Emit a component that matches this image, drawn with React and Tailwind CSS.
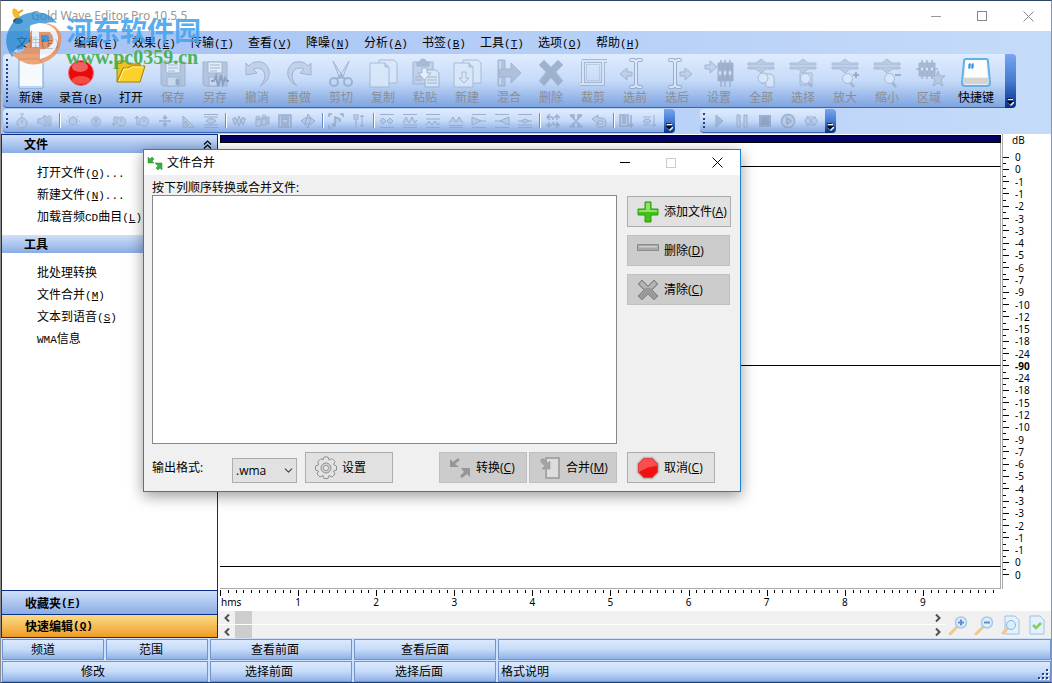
import { ChevronDown } from "lucide-react";

const GRAY = { fill: "#bccde6", stroke: "#96a9c6", strokeWidth: 1 };
const PALE = { fill: "#dbe8fa", stroke: "#9fb2ce", strokeWidth: 1 };

function Lens({ children }) {
  return (
    <g {...PALE}>
      <path d="M3 6h8l5-4 5 4h8v2H3zM3 10h26v2h-8l-5 4-5-4H3z" fill="#b3c5df" />
      <path d="m21.500 26 3.500 4" strokeWidth="3" />
      <circle cx="18.500" cy="21.500" r="5" />
      {children}
    </g>
  );
}

function Beam({ x }) {
  return (
    <g>
      <path d={`M${x - 5} 3h3l2 2 2-2h3M${x - 5} 30h3l2-2 2 2h3M${x} 4v25`} fill="none" stroke="#8fa3c1" strokeWidth="4" strokeLinecap="round" />
      <path d={`M${x - 5} 3h3l2 2 2-2h3M${x - 5} 30h3l2-2 2 2h3M${x} 4v25`} fill="none" stroke="#dce9fb" strokeWidth="2" strokeLinecap="round" />
    </g>
  );
}

const BIG = {
  blank: (
    <g>
      <path d="M4 2h20l4 4v25H4z" fill="#f6faff" stroke="#6ea3d4" />
      <path d="M5 29h22v2H5z" fill="#b8d7f3" />
      <path d="M24 2v4h4z" fill="#b8d2ec" />
    </g>
  ),
  record: (
    <g>
      <circle cx="16" cy="16" r="12.500" fill="#e90b0b" stroke="#f06a6a" />
      <ellipse cx="15" cy="10" rx="8" ry="5" fill="#fff" opacity="0.350" />
      <ellipse cx="16" cy="23" rx="9" ry="4" fill="#ff8b7d" opacity="0.500" />
    </g>
  ),
  open: (
    <g stroke="#a87c00" strokeWidth="1">
      <path d="M2 25V6q0-2 2-2h6l3 3h12v4" fill="#f0c020" />
      <path d="M2 25 8 11h5l3-2h14l-5 16z" fill="#fbd22c" />
      <path d="M4 24 9 12h5l3-2h11" fill="none" stroke="#fff5a8" />
    </g>
  ),
  save: (
    <g {...GRAY}>
      <path d="M4 5h24v24H6l-2-2z" fill="#adbfd9" />
      <path d="M9 5h14v11H9z" fill="#e5effc" />
      <path d="M11 8h10M11 11h10M11 14h7" />
      <path d="M10 20h13v9H10z" fill="#c9d8ee" />
      <path d="M19 22h3v6h-3z" fill="#8497b5" />
    </g>
  ),
  saveAs: (
    <g {...GRAY}>
      <path d="M4 5h24v24H6l-2-2z" fill="#adbfd9" />
      <path d="M9 5h14v11H9z" fill="#e5effc" />
      <path d="M11 8h10M11 11h10M11 14h7" />
      <path d="M10 20h10v9H10z" fill="#c9d8ee" />
      <path d="M12 24h3l2-5 2 10 3-11 2 9 2-6 2 3h2" fill="none" stroke="#7f93b3" strokeWidth="2" />
    </g>
  ),
  undo: <path d="M5 6v12l11-2-4-4q8-3 11 3 3 7-4 14 11-6 9-16Q25 3 14 5q-4 1-6 4z" {...GRAY} />,
  redo: <path d="M28 6v12l-11-2 4-4q-8-3-11 3-3 7 4 14Q3 23 5 13 8 3 19 5q4 1 6 4z" {...GRAY} />,
  cut: (
    <g {...GRAY}>
      <path d="m8 4 9 15-2 3zM24 4l-9 15 2 3z" fill="#dce8f9" />
      <g fill="none" strokeWidth="2">
        <circle cx="9" cy="25" r="4" />
        <circle cx="23" cy="25" r="4" />
        <path d="m12 22 5-5M20 22l-5-5" />
      </g>
    </g>
  ),
  copy: (
    <g {...PALE}>
      <path d="M12 3h15l3 3v20H12z" />
      <path d="M3 6h15l4 4v20H3z" />
      <path d="M18 6v4h4" fill="#b7c8e1" />
    </g>
  ),
  paste: (
    <g {...GRAY}>
      <path d="M4 5h20v22H4z" />
      <path d="M8 9V5h3q0-3 3-3t3 3h3v4z" fill="#9cb0cc" />
      <path d="M16 13h11l3 3v14H16z" fill="#dce8fa" />
      <path d="M18 20h10M18 23h10M18 26h10M6 20h7M6 23h7" />
      <path d="M13 11h5v5h4l-6.500 7L9 16h4z" fill="#eaf2fe" />
    </g>
  ),
  copyNew: (
    <g {...PALE}>
      <path d="M12 3h15l3 3v20H12z" />
      <path d="M3 6h15l4 4v20H3z" />
      <path d="M18 6v4h4" fill="#b7c8e1" />
      <path d="M11 15h4v6h3l-5 5-5-5h3z" />
    </g>
  ),
  mix: (
    <g {...GRAY}>
      <path d="M5 3h7v26H5z" fill="#a9bcd8" />
      <path d="M6 12h12V6l10 10-10 10v-6H6z" fill="#a6b9d5" />
      <path d="M7 4v8M7 21v7" stroke="#e0ebfb" />
    </g>
  ),
  remove: <path d="m4 8 5-5 7 7 7-7 5 5-7 7 7 9-5 5-7-8-7 8-5-5 7-9z" fill="#93a7c4" stroke="#a9bcd6" />,
  crop: (
    <g fill="none" strokeLinejoin="round">
      <path d="M3 27h23V4M5 4h25M6 4v24" stroke="#9bafcb" strokeWidth="4" />
      <path d="M3 27h23V4M5 4h25M6 4v24" stroke="#d7e4f7" strokeWidth="2" />
      <path d="M9.500 7.500h13v16h-13z" stroke="#a5b8d3" strokeDasharray="2 1" />
    </g>
  ),
  before: (
    <g>
      <path d="M1 17 8 11v4h5v4H8v4z" {...GRAY} />
      <Beam x={17} />
    </g>
  ),
  after: (
    <g>
      <path d="M31 17 24 11v4h-5v4h5v4z" {...GRAY} />
      <Beam x={14} />
    </g>
  ),
  place: (
    <g {...GRAY}>
      <path d="M2 8h5V4l7 6-7 6v-4H2z" />
      <path d="M15 6h15v18H15z" fill="#8da1bf" />
      <path d="M18 3v27M22 3v27M27 3v27" strokeWidth="1.500" />
      <path d="m15 16 2-4 2 4-2 4zM20 16l2-4 2 4-2 4zM25 16l2-4 2 4-2 4z" fill="#d3e1f5" />
    </g>
  ),
  all: (
    <g>
      <Lens />
      <path d="M20 17h6l3 3v10h-8z" {...PALE} />
      <circle cx="18" cy="21" r="5" {...PALE} />
    </g>
  ),
  select: (
    <g>
      <Lens />
      <path d="M13 16h12v12H13z" fill="none" stroke="#9aaeca" />
    </g>
  ),
  zoomIn: (
    <g>
      <Lens />
      <path d="M24 18h6M27 15v6" stroke="#8fa3c1" strokeWidth="2" />
    </g>
  ),
  zoomOut: (
    <g>
      <Lens />
      <path d="M24 18h6" stroke="#8fa3c1" strokeWidth="2" />
    </g>
  ),
  region: (
    <g {...GRAY}>
      <path d="M6 6h16v13H6z" fill="#9db0cc" />
      <path d="M9 3v19M14 3v19M19 3v19M3 12h22" strokeWidth="1.500" />
      <path d="m7 12 2-3 2 3-2 3zM12 12l2-3 2 3-2 3zM17 12l2-3 2 3-2 3z" fill="#d3e1f5" />
      <path d="m25 14 2 5h5l-4 4 2 6-5-3-5 3 2-6-4-4h5z" fill="#b5c7e0" />
    </g>
  ),
  key: (
    <g>
      <path d="M6 2h20q2 0 2 2l2 22q0 3-3 3H5q-3 0-3-3L4 4q0-2 2-2z" fill="#eee" stroke="#60b2e8" strokeWidth="2" />
      <path d="M6 3h20l1 17H5z" fill="#fdfdfd" />
      <path d="M4 21h24l1 6H3z" fill="#d6d4d2" />
      <path d="m10 6-1 6M13 6l-1 6M8 8h6M8 10h6" stroke="#1d83e0" strokeWidth="1" fill="none" />
    </g>
  ),
};

const TOOLS = [
  ["新建", "blank", "w-[42px]"],
  ["录音", "record", "w-[58px]", "R"],
  ["打开", "open", "w-[42px]"],
  ["保存", "save"],
  ["另存", "saveAs"],
  ["撤消", "undo"],
  ["重做", "redo"],
  ["剪切", "cut"],
  ["复制", "copy"],
  ["粘贴", "paste"],
  ["新建", "copyNew"],
  ["混合", "mix"],
  ["删除", "remove"],
  ["裁剪", "crop"],
  ["选前", "before"],
  ["选后", "after"],
  ["设置", "place"],
  ["全部", "all"],
  ["选择", "select"],
  ["放大", "zoomIn"],
  ["缩小", "zoomOut"],
  ["区域", "region"],
  ["快捷键", "key", "w-[52px]"],
];

// small effect icons, 16x16, all drawn disabled
const FRAME = "M1 1.500h14M1 14.500h14";
const FX = {
  timer: <path d="M8 2v3M6 1h4M8 5a5 5 0 1 0 .1 0M8 7v3" />,
  volume: <path d="M1 6h3l4-4v12l-4-4H1zM10 3v10M12 2v12M14 3v10" />,
  bright: <path d="M8 4a4 4 0 1 0 .1 0M1 8h1M14 8h1M3 3l1 1M13 3l-1 1M3 13l1-1M13 13l-1-1" />,
  clock: <path d="M8 4a4.500 4.500 0 1 0 .1 0M8 6v3M6 7h4M6 10h4" />,
  back: <path d="M10 4a4.500 4.500 0 1 0 .1 0M10 6v3M3 12V4h4M1 10l2 3 2-3" />,
  fwd: <path d="M10 4a4.500 4.500 0 1 0 .1 0M10 6v3M3 4v8h3M1 6l2-3 2 3" />,
  squeeze: <path d="M2 8h12M8 2v4M8 14v-4M6 4l2 2 2-2M6 12l2-2 2 2" strokeWidth="1.500" />,
  ramp: <path d="M3 3v11h11zM5 8v4h4z" />,
  normal: <path d={FRAME + "M1 4h14M1 12h14M3 8q5-5 10 0-5 5-10 0z"} />,
  crowd: <path d="M4 4 2 8l2 4 2-4zM8 3 6 8l2 5 2-5zM12 4l-2 4 2 4 2-4zM2 5v2M14 5v2" />,
  cam: <path d="M2 6h5v7H2zM8 5h4v7H8zM4 3a2 2 0 1 0 .1 0M10 2a2 2 0 1 0 .1 0M13 4h2v7h-2z" />,
  film: <path d="M2 2h12v12H2zM5 6h6v4H5zM4 4h8M4 12h8" strokeWidth="1.500" />,
  dia: <path d="m1 8 4-3h6l4 3-4 3H5zM8 1l3 4-3 10-3-4z" />,
  note: <path d="M1 4V1h3M12 1h3v3M1 12v3h3M7 11V4l5 2v3M5 11h2v2H5z" strokeWidth="1.500" />,
  fork: <path d="M3 1v5q1 2 4 0V1M5 7v8M11 2v12M9 4l2-2 2 2M9 12l2 2 2-2" />,
  eqA: <path d={FRAME + "M1 8l3-3 3 3-3 3zM8 8l3-3 3 3-3 3z"} />,
  eqB: <path d={FRAME + "M1 10l3-6 3 6 3-6 3 6 2-3M1 12h14"} />,
  eqC: <path d={FRAME + "M1 6h14M1 12l3-4 3 4 3-4 3 4 2-2"} />,
  eqD: <path d="M1 10l4-6 3 5 3-5 4 6M1 12.500h14M1 14.500h14" />,
  fadeR: <path d={FRAME + "M1 4l9 4-9 4zM10 8h5"} />,
  fadeL: <path d={FRAME + "M15 4 6 8l9 4zM1 8h5"} />,
  fadeM: <path d={FRAME + "M1 8h3l4-2 4 2h3M4 8l4 2 4-2M1 12h14"} />,
  swap: <path d="M5 1 2 4l3 3M2 4h4q2 0 2 3M11 15l3-3-3-3M14 12h-4q-2 0-2-3M15 5l-3-3-3 3M12 2v5M1 11l3 3 3-3M4 14V9" fill="none" strokeWidth="1.500" />,
  cross: <path d="M2 2l12 12M14 2 2 14M2 2h4v4M14 2h-4v4M2 14h4v-4M14 14h-4v-4" strokeWidth="1.500" />,
  ret: <path d="M1 6l6-4v3h5q3 1 3 5 0 4-4 4H6v-3h5q2-2 0-3H7v3z" />,
  noise: <path d="M1 2h8v11H1zM3 4h4M3 6h4M3 8h4M3 10h4M12 2v10M10 11l2 3 2-3" strokeWidth="1.500" />,
  waveD: <path d="M1 4h8M1 8q4-4 8 0-4 4-8 0zM1 12h8M12 2v11M10 11l2 3 2-3" />,
  play: <path d="M5 2v12l7-6z" fill="#9fb2ce" />,
  pause: <path d="M3 2h3v12H3zM10 2h3v12h-3z" />,
  stop: <path d="M3 3h10v10H3z" strokeWidth="2" fill="#8498b8" />,
  playC: <path d="M8 1.500a6.500 6.500 0 1 0 .1 0M7 5v6l4-3z" strokeWidth="1.500" />,
  loop: <path d="M5 5a3 3 0 1 0 .1 0M11 5a3 3 0 1 0 .1 0M3 4h10M3 12h10" />,
};

const FX_GROUPS = [
  ["timer", "volume"],
  ["bright", "clock", "back", "fwd", "squeeze", "ramp", "normal"],
  ["crowd", "cam", "film", "dia"],
  ["note", "fork"],
  ["eqA", "eqB", "eqC", "eqD", "fadeR", "fadeL", "fadeM"],
  ["swap", "cross", "ret"],
  ["noise", "waveD"],
];

const MENUS = [
  ["文件", "F"], ["编辑", "E"], ["效果", "E"], ["传输", "T"], ["查看", "V"], ["降噪", "N"],
  ["分析", "A"], ["书签", "B"], ["工具", "T"], ["选项", "O"], ["帮助", "H"],
];

const HALF = ["0", "0", "-1", "-1", "-2", "-3", "-3", "-4", "-5", "-6", "-7", "-9", "-10", "-12", "-15", "-18", "-24"];
const LEVELS = [...HALF, "-90", ...[...HALF].reverse()];

function Mono({ children }) {
  return <span className="font-['Liberation_Mono',monospace] text-[11px]">{children}</span>;
}

function Hot({ k }) {
  return <Mono>(<span className="underline">{k}</span>)</Mono>;
}

function Grip({ className }) {
  return <span className={`w-[3px] shrink-0 border-l-2 border-dotted border-[#27417f] ${className}`} />;
}

function Cap() {
  return (
    <button aria-label="更多" className="flex w-[11px] shrink-0 items-end justify-center rounded-r-sm bg-linear-to-b from-[#77a5f2] via-[#467bd0] to-[#062f88] pb-[2px]">
      <svg className="h-2 w-[7px]" viewBox="0 0 7 8">
        <path d="M1 1.500h5M1 4.500h6L4 7.500z" fill="#fff" stroke="#fff" />
        <path d="M0 .5h5M0 3.500h6L3 6.500z" fill="#000" stroke="#000" strokeWidth=".6" />
      </svg>
    </button>
  );
}

function FxButton({ name }) {
  return (
    <button aria-label={name} disabled className="flex w-[23px] items-center justify-center">
      <svg className="size-4 opacity-80" viewBox="0 0 16 16" fill="#b5c7e3" stroke="#8fa3c3" strokeWidth="1">{FX[name]}</svg>
    </button>
  );
}

function WinControls({ dim, maxDim }) {
  return (
    <div className="flex self-stretch">
      <button aria-label="最小化" className="flex w-[46px] items-center justify-center">
        <span className={`h-px w-[10px] ${dim ? "bg-[#999]" : "bg-black"}`} />
      </button>
      <button aria-label="最大化" className="flex w-[46px] items-center justify-center">
        <span className={`size-[10px] border ${maxDim ? "border-[#ccc]" : "border-[#888]"}`} />
      </button>
      <button aria-label="关闭" className="flex w-[46px] items-center justify-center">
        <svg className="size-[11px]" viewBox="0 0 11 11" stroke={dim ? "#888" : "#000"}><path d="m.5.5 10 10M10.500.5l-10 10" /></svg>
      </button>
    </div>
  );
}

function PanelHead({ children, arrow }) {
  return (
    <div className="flex h-[18px] items-center justify-between bg-linear-to-b from-[#cfe0fa] to-[#8bade4] pl-[22px] pr-[5px] font-bold">
      {children}
      {arrow && (
        <svg className="size-[9px]" viewBox="0 0 9 9" fill="none" stroke="#000" strokeWidth="1.200"><path d="m1 4.500 3.500-3.500L8 4.500M1 8.500 4.500 5 8 8.500" /></svg>
      )}
    </div>
  );
}

function PanelList({ items }) {
  return (
    <ul className="py-2">
      {items.map((it, i) => (
        <li key={i} className="h-[22px] overflow-hidden whitespace-nowrap pl-[35px] leading-[22px]">
          <a href="#">{it}</a>
        </li>
      ))}
    </ul>
  );
}

function ScrollRow() {
  return (
    <div className="flex h-[13px] items-center bg-[#f0f0f0]">
      <button aria-label="向左" className="flex w-[17px] justify-center">
        <svg className="h-2 w-[6px]" viewBox="0 0 6 8" fill="none" stroke="#505050" strokeWidth="2"><path d="M5 .5 1.500 4 5 7.500" /></svg>
      </button>
      <span className="h-full w-[17px] bg-[#cdcdcd]" />
      <button aria-label="向右" className="ml-auto flex w-[17px] justify-center">
        <svg className="h-2 w-[6px]" viewBox="0 0 6 8" fill="none" stroke="#505050" strokeWidth="2"><path d="M1 .5 4.500 4 1 7.500" /></svg>
      </button>
    </div>
  );
}

function StatusCell({ children, className }) {
  return (
    <div className={`flex h-[21px] items-center justify-center border border-[#7094cf] bg-linear-to-b from-[#dbe9fd] via-[#c6dbf8] to-[#8fb2e8] pb-[2px] ${className}`}>
      {children}
    </div>
  );
}

function DialogButton({ label, k, icon, disabled, className }) {
  return (
    <button
      disabled={disabled}
      className={`flex h-[31px] items-center gap-1 border pl-2 whitespace-nowrap text-black ${disabled ? "border-[#bfbfbf] bg-[#ccc]" : "border-[#adadad] bg-[#e1e1e1]"} ${className}`}
    >
      <svg className="size-6 shrink-0" viewBox="0 0 24 24">{icon}</svg>
      <span>{label}{k && <>(<span className="underline">{k}</span>)</>}</span>
    </button>
  );
}

function Magnifier({ sign }) {
  return (
    <g>
      <path d="m2 19 7-7" stroke="#f3c88c" strokeWidth="3" strokeLinecap="round" />
      <circle cx="13" cy="7.500" r="5.500" fill="#d9f0fb" stroke="#a5c8e8" strokeWidth="1.500" />
      <path d={sign} stroke="#668bcf" strokeWidth="2" />
    </g>
  );
}

function MergeDialog() {
  return (
    <section className="absolute top-[148px] left-[142px] flex h-[343px] w-[598px] flex-col border border-[#1883d7] bg-[#f0f0f0] font-['Open_Sans','Noto_Sans_CJK_SC',sans-serif] shadow-[0_4px_14px_rgba(0,0,0,0.4)]">
      <header className="flex h-[25px] items-center gap-1 bg-white pl-[3px]">
        <svg className="size-4" viewBox="0 0 16 16" fill="#35b335" stroke="#1e8f26" strokeWidth=".5">
          <path d="M1 2l2 2 2-2 2 2-2 2 2 2H1z" />
          <path d="M15 15l-2-2-2 2-2-2 2-2-3-3h7z" />
        </svg>
        <h2 className="flex-1">文件合并</h2>
        <WinControls maxDim />
      </header>

      <div className="flex flex-1 flex-col px-2 pt-[5px]">
        <label htmlFor="files" className="h-[15px] leading-[16px]">按下列顺序转换或合并文件:</label>
        <div className="flex h-[249px] gap-[10px]">
          <select id="files" multiple className="w-[465px] border border-[#828790] bg-white" />
          <div className="flex flex-col gap-2 pt-px">
            <DialogButton
              label="添加文件" k="A" className="w-[104px]"
              icon={
                <g>
                  <path d="M9 2h6v7h7v6h-7v7H9v-7H2V9h7z" fill="#3fc214" stroke="#319a14" />
                  <path d="M10 3h4v7H10zM3 10h18v2H3z" fill="#8fe36c" />
                </g>
              }
            />
            <DialogButton
              label="删除" k="D" disabled className="w-[103px]"
              icon={<g><path d="M1.500 5.500h21v6h-21z" fill="#a8a8a8" stroke="#8c8c8c" /><path d="M3 7h18v1.500H3z" fill="#cfcfcf" /></g>}
            />
            <DialogButton
              label="清除" k="C" disabled className="w-[103px]"
              icon={
                <g>
                  <path d="m2 6 4-4 6 6 6-6 4 4-6 6 6 6-4 4-6-6-6 6-4-4 6-6z" fill="#999" stroke="#858585" />
                  <path d="m3.500 6 2.500-2.500 6 6 6-6L20.500 6l-4 4h-9z" fill="#b5b5b5" />
                </g>
              }
            />
          </div>
        </div>

        <div className="mt-2 flex h-[31px] items-center">
          <label htmlFor="fmt" className="w-[80px]">输出格式:</label>
          <div className="relative w-[65px] self-end">
            <select id="fmt" className="block h-[25px] w-full appearance-none border border-[#adadad] bg-[#e1e1e1] pl-[3px] text-xs">
              <option>.wma</option>
            </select>
            <ChevronDown className="pointer-events-none absolute top-[6px] right-[2px] size-[13px] text-[#444]" strokeWidth={2} />
          </div>
          <DialogButton
            label="设置" className="ml-2 w-[88px]"
            icon={
              <g stroke="#909090" strokeWidth="1">
                <path d="m10 1 4 0 1 3 3-1.500 3 3L19.500 8.500l3 1.500v4l-3 1 1.500 3-3 3-3-1.500-1 3h-4l-1-3-3 1.500-3-3 1.500-3-3-1v-4l3-1L4 5.500l3-3L9 4z" fill="#e3e3e3" />
                <circle cx="12" cy="12" r="5" fill="#d2d2d2" />
                <circle cx="12" cy="12" r="2.500" fill="#f0f0f0" />
              </g>
            }
          />
          <DialogButton
            label="转换" k="C" disabled className="ml-[46px] w-[88px]"
            icon={<g fill="#969696"><path d="M2 3l3 3 5-4 2 2-5 4 4 3H2z" /><path d="M22 21l-3-3-5 4-2-2 4-4-3-4h9z" /></g>}
          />
          <DialogButton
            label="合并" k="M" disabled className="ml-[2px] w-[88px]"
            icon={
              <g>
                <path d="M8 2h13v20H8z" fill="#ddd" stroke="#a6a6a6" strokeWidth="2" />
                <path d="M3 3h3l4 4 2-2v8H4l3-3-4-4z" fill="#a4a4a4" stroke="#8f8f8f" strokeWidth=".5" />
              </g>
            }
          />
          <DialogButton
            label="取消" k="C" className="ml-[10px] w-[88px]"
            icon={
              <g>
                <path d="M7.500 1.500h9l6 6v9l-6 6h-9l-6-6v-9z" fill="#f01212" stroke="#bbb" strokeWidth="1.500" />
                <path d="M8 3h8l5 5v2Q12 10 3 16V8z" fill="#ff6a6a" opacity=".7" />
              </g>
            }
          />
        </div>
      </div>
    </section>
  );
}

function Watermark() {
  return (
    <div className="pointer-events-none absolute top-[9px] left-[4px] flex gap-1">
      <svg className="h-[58px] w-[57px] opacity-75" viewBox="0 0 57 58">
        <path d="M7 47Q-3 33 4 19 12 3 30 2q14 0 22 11-12-3-19 6l-6-3-14 18-3 11z" fill="#2488d0" />
        <path d="M5 42q13 5 17-9V20l9-6q18-4 25 10 2 18-12 26-22 12-39-8z" fill="#f08a48" />
        <path d="M8 43 27 20v17h7V22h11q7 8 0 14-4 4-10 3v10Q54 44 53 27 51 14 34 13l-8 2-14 20v6z" fill="#fff" />
        <path d="M8 40 25 16v16q-6 2-7 7z" fill="#2488d0" />
        <path d="M36 25h7q3 4-1 7h-6z" fill="#2488d0" />
      </svg>
      <div className="pt-[5px] opacity-90">
        <div className="font-['Noto_Sans_CJK_SC',sans-serif] text-[27px] leading-[30px] font-bold text-[#48a5ee]">河东软件园</div>
        <div className="font-['Liberation_Serif',serif] text-[20px] leading-[24px] font-bold text-[#3fae49]">www.pc0359.cn</div>
      </div>
    </div>
  );
}

export default function App() {
  return (
    <div className="relative flex min-h-screen flex-col border border-t-[#2a4560] border-r-[#8a96a8] border-b-[#1e4578] border-l-[#8d8d8d] bg-white font-['Noto_Sans_CJK_SC',sans-serif] text-xs leading-4 text-black">
      <header className="flex h-[30px] items-center bg-white pl-2">
        <svg className="size-4" viewBox="0 0 16 16">
          <ellipse cx="7" cy="6" rx="3" ry="6" fill="#f3bd24" transform="rotate(-25 7 6)" />
          <path d="M9 5l5-3" stroke="#e0a010" strokeWidth="2" />
          <ellipse cx="9" cy="13" rx="5" ry="3" fill="#3d4654" />
        </svg>
        <h1 className="ml-[6px] flex-1 font-['Noto_Sans',sans-serif] text-[#999]">Gold Wave Editor Pro 10.5.5</h1>
        <WinControls dim />
      </header>

      <div className="bg-linear-to-r from-[#a5c1f4] to-[#c5dbf9]">
        <nav className="flex h-[23px] items-center pl-2">
          {MENUS.map(([t, k]) => (
            <button key={t} className="w-[58px] whitespace-nowrap">{t}<Hot k={k} /></button>
          ))}
        </nav>

        <div className="flex h-[54px] w-fit pl-[2px]">
          <div className="flex rounded-l border-b border-[#3b65ab] bg-linear-to-b from-[#dfecfe] via-[#c6dbf8] to-[#7fa4e0] pr-[3px]">
            <Grip className="my-[5px] mr-px ml-[3px]" />
            {TOOLS.map(([t, icon, w, k], i) => (
              <button key={i} disabled={!w} className={`flex shrink-0 flex-col items-center pt-[3px] whitespace-nowrap ${w || "w-[42px] text-[#8b8d92]"}`}>
                <svg className={w ? "size-8" : "size-8 opacity-80"} viewBox="0 0 32 32">{BIG[icon]}</svg>
                <span>{t}{k && <Hot k={k} />}</span>
              </button>
            ))}
          </div>
          <Cap />
        </div>

        <div className="flex h-[26px] py-px pl-[2px]">
          <div className="flex rounded-l border-b border-[#3b65ab] bg-linear-to-b from-[#dfecfe] via-[#c6dbf8] to-[#86aae4] pr-[3px]">
            <Grip className="my-1 mr-px ml-[3px]" />
            {FX_GROUPS.map((g, i) => (
              <div key={i} className="flex">
                {i > 0 && <span className="my-1 ml-[3px] w-[2px] border-r border-l border-r-white border-l-[#6a8ccb]" />}
                {g.map((n) => <FxButton key={n} name={n} />)}
              </div>
            ))}
          </div>
          <Cap />
          <div className="ml-[25px] flex rounded-l border-b border-[#3b65ab] bg-linear-to-b from-[#dfecfe] via-[#c6dbf8] to-[#86aae4] pr-[3px]">
            <Grip className="my-1 mr-px ml-[3px]" />
            {["play", "pause", "stop", "playC", "loop"].map((n) => <FxButton key={n} name={n} />)}
          </div>
          <Cap />
        </div>
      </div>

      <main className="flex flex-1">
        <aside className="flex w-[217px] shrink-0 flex-col border border-b-0 border-[#0a2d8c] bg-white">
          <PanelHead arrow>文件</PanelHead>
          <PanelList
            items={[
              <>打开文件<Hot k="O" /><Mono>...</Mono></>,
              <>新建文件<Hot k="N" /><Mono>...</Mono></>,
              <>加载音频<Mono>CD</Mono>曲目<Hot k="L" /><Mono>...</Mono></>,
            ]}
          />
          <PanelHead>工具</PanelHead>
          <PanelList
            items={["批处理转换", <>文件合并<Hot k="M" /></>, <>文本到语音<Hot k="S" /></>, <><Mono>WMA</Mono>信息</>]}
          />
          <div className="mt-auto font-bold">
            <button className="flex h-6 w-full items-center border-t border-[#0a2d8c] bg-linear-to-b from-[#cfe0fa] to-[#8bade4] pl-[23px]">收藏夹<Hot k="F" /></button>
            <button className="flex h-6 w-full items-center border-y border-[#0a2d8c] bg-linear-to-b from-[#fbdc84] to-[#ef9c1c] pl-[23px]">快速编辑<Hot k="Q" /></button>
          </div>
        </aside>

        <div className="flex min-w-0 flex-1 flex-col font-['Noto_Sans',sans-serif] text-[10px]">
          <div className="flex flex-1 pl-[2px]">
            <div className="flex flex-1 flex-col border-b border-[#aaa]">
              <div className="mt-px h-2 border border-black bg-[#000066]" />
              <div className="flex-[23] border-r border-b border-r-[#aaa] border-b-black" />
              <div className="flex-[199] border-r border-b border-r-[#aaa] border-b-black" />
              <div className="flex-[201] border-r border-b border-r-[#aaa] border-b-black" />
              <div className="flex-[21] border-r border-[#aaa]" />
            </div>
            <div className="ml-px flex w-[49px] flex-col border-l border-[#aaa] pb-2">
              <div className="h-[17px] pl-[9px] leading-[13px]">dB</div>
              {LEVELS.map((v, i) => (
                <div key={i} className="flex flex-1 items-center gap-[6px]">
                  <span className="flex h-full w-[6px] flex-col justify-between">
                    <i className={`h-px w-[3px] ${i ? "bg-black" : ""}`} />
                    <i className="h-px w-[6px] bg-black" />
                    <i className="h-px" />
                  </span>
                  <span className={`leading-[12px] ${v === "-90" ? "font-bold" : ""}`}>{v}</span>
                </div>
              ))}
            </div>
          </div>

          <div className="flex h-[22px] overflow-hidden pr-[50px] pl-[2px]">
            {Array.from({ length: 10 }, (_, s) => (
              <div key={s} className="flex-1">
                <div className="flex h-[7px] pt-px">
                  {Array.from({ length: 10 }, (_, m) => (
                    <span key={m} className={`flex-1 border-l border-black ${m ? "h-[3px]" : "h-[6px]"}`} />
                  ))}
                </div>
                <div className={`leading-[12px] ${s ? "-ml-4 w-8 text-center" : "pl-px"}`}>{s || "hms"}</div>
              </div>
            ))}
          </div>

          <div className="flex h-[27px] bg-[#f0f0f0]">
            <div className="flex flex-1 flex-col">
              <ScrollRow />
              <span className="h-px bg-white" />
              <ScrollRow />
            </div>
            <div className="flex w-[105px] items-center justify-between pr-1 pl-[2px]">
              <button aria-label="放大"><svg className="size-5" viewBox="0 0 20 20"><Magnifier sign="M10 7.500h6M13 4.500v6" /></svg></button>
              <button aria-label="缩小"><svg className="size-5" viewBox="0 0 20 20"><Magnifier sign="M10 7.500h6" /></svg></button>
              <button aria-label="预览">
                <svg className="size-5" viewBox="0 0 20 20">
                  <path d="M4 1h10l4 4v14H4z" fill="#e3f1fc" stroke="#9dc3e6" />
                  <path d="m2 18 5-5" stroke="#f3c88c" strokeWidth="3" strokeLinecap="round" />
                  <circle cx="10" cy="10" r="4.500" fill="#d9f0fb" stroke="#8fb5dc" />
                </svg>
              </button>
              <button aria-label="确定">
                <svg className="size-5" viewBox="0 0 20 20">
                  <path d="M3 1h10l4 4v14H3z" fill="#e3f1fc" stroke="#9dc3e6" />
                  <path d="m6 10 3 3 5-5" fill="none" stroke="#84cb62" strokeWidth="2.500" />
                </svg>
              </button>
            </div>
          </div>
        </div>
      </main>

      <footer className="flex flex-col gap-px bg-[#cfe0fa] pt-px pl-px">
        <div className="flex gap-[2px]">
          <StatusCell className="w-[102px] pr-5">频道</StatusCell>
          <StatusCell className="w-[102px] pr-3">范围</StatusCell>
          <StatusCell className="w-[142px] pr-3">查看前面</StatusCell>
          <StatusCell className="w-[142px]">查看后面</StatusCell>
          <StatusCell className="flex-1" />
        </div>
        <div className="flex gap-[2px]">
          <StatusCell className="w-[206px] pr-6">修改</StatusCell>
          <StatusCell className="w-[142px] pr-6">选择前面</StatusCell>
          <StatusCell className="w-[142px] pr-3">选择后面</StatusCell>
          <div className="flex h-[21px] flex-1 items-center justify-between border border-[#7094cf] bg-linear-to-b from-[#dbe9fd] via-[#c6dbf8] to-[#8fb2e8] pl-[2px]">
            <span className="pb-[2px]">格式说明</span>
            <svg className="size-3 self-end" viewBox="0 0 12 12">
              <path d="M9 1h2v2H9zM5 5h2v2H5zM9 5h2v2H9zM1 9h2v2H1zM5 9h2v2H5zM9 9h2v2H9z" fill="#fff" />
              <path d="M8 0h2v2H8zM4 4h2v2H4zM8 4h2v2H8zM0 8h2v2H0zM4 8h2v2H4zM8 8h2v2H8z" fill="#27417f" />
            </svg>
          </div>
        </div>
      </footer>

      <MergeDialog />
      <Watermark />
    </div>
  );
}
